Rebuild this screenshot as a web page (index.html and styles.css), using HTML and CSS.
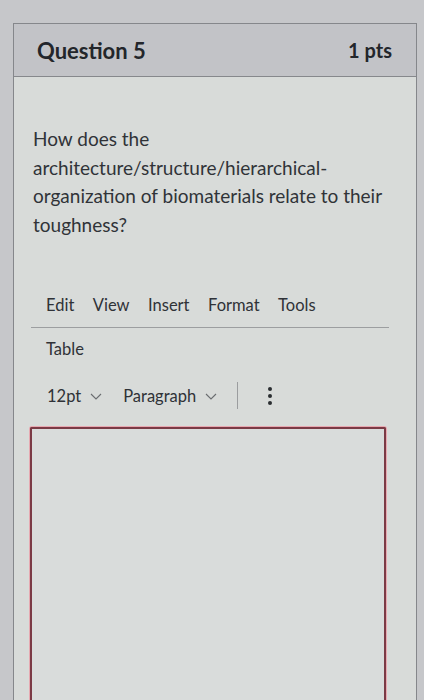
FILE: index.html
```html
<!DOCTYPE html>
<html>
<head>
<meta charset="utf-8">
<link rel="stylesheet" href="styles.css">
</head>
<body>
<div class="card">
  <div class="header">
    <span class="title">Question 5</span>
    <span class="pts">1 pts</span>
  </div>
  <div class="content">
    <p class="question">How does the architecture/structure/hierarchical-organization of biomaterials relate to their toughness?</p>
    <div class="editor">
      <div class="menubar">
        <span>Edit</span><span>View</span><span>Insert</span><span>Format</span><span>Tools</span>
      </div>
      <div class="menubar2"><span>Table</span></div>
      <div class="toolbar">
        <span class="tool">12pt <svg class="chev" viewBox="0 0 12 7" width="12" height="7"><path d="M1 1l5 5 5-5" fill="none" stroke="#6a6d70" stroke-width="1.1"/></svg></span>
        <span class="tool">Paragraph <svg class="chev" viewBox="0 0 12 7" width="12" height="7"><path d="M1 1l5 5 5-5" fill="none" stroke="#6a6d70" stroke-width="1.1"/></svg></span>
        <span class="sep"></span>
        <span class="more"><i></i><i></i><i></i></span>
      </div>
      <div class="area"></div>
    </div>
  </div>
</div>
</body>
</html>
```
FILE: styles.css
```css
html, body {
  margin: 0;
  padding: 0;
  height: 700px;
  overflow: hidden;
}
body {
  background: #c6c7ca;
  font-family: Lato, "Open Sans", sans-serif;
  color: #2d3035;
}
.card {
  margin: 23px 7px 0 13px;
  border: 1px solid #85878b;
  border-bottom: none;
  height: 700px;
  background: #d8dbd9;
}
.header {
  height: 52px;
  background: #c2c3c7;
  border-bottom: 1px solid #86888c;
  display: flex;
  align-items: center;
  justify-content: space-between;
  padding: 0 24px 0 23px;
}
.title {
  font-weight: 700;
  font-size: 22px;
  color: #23262b;
}
.pts {
  font-weight: 700;
  font-size: 20px;
  color: #23262b;
}
.content {
  padding: 48px 24px 0 19px;
}
.question {
  margin: 0;
  font-size: 19px;
  line-height: 28.5px;
  color: #303338;
  width: 360px;
}
.editor {
  margin-top: 56px;
  width: 358px;
  margin-left: -2px;
}
.menubar {
  display: flex;
  gap: 18.5px;
  padding: 0 0 12px 15px;
  border-bottom: 1px solid #9c9ea0;
  font-size: 16.5px;
  line-height: 20px;
  color: #2f3237;
}
.menubar2 {
  padding: 11px 0 0 15px;
  font-size: 16.5px;
  line-height: 20px;
  color: #2f3237;
}
.toolbar {
  display: flex;
  align-items: center;
  padding: 23px 0 0 16px;
  font-size: 16.5px;
  line-height: 20px;
  color: #2f3237;
}
.tool {
  display: inline-flex;
  align-items: center;
  gap: 9px;
  margin-right: 21px;
}
.chev { margin-top: 1px; }
.sep {
  width: 1px;
  height: 27px;
  background: #9b9d9f;
  margin: 0 30px 0 -1px;
}
.more {
  display: flex;
  flex-direction: column;
  gap: 3px;
}
.more i {
  display: block;
  width: 4px;
  height: 4px;
  border-radius: 50%;
  background: #2a2d31;
}
.area {
  margin-top: 18px;
  margin-left: -1px;
  width: 352px;
  height: 300px;
  border: 2px solid #7b3a45;
  border-bottom: none;
  border-radius: 2px 2px 0 0;
  box-shadow: 0 0 0 1px #e7a9b1;
  background: #d9dcdb;
}
```
